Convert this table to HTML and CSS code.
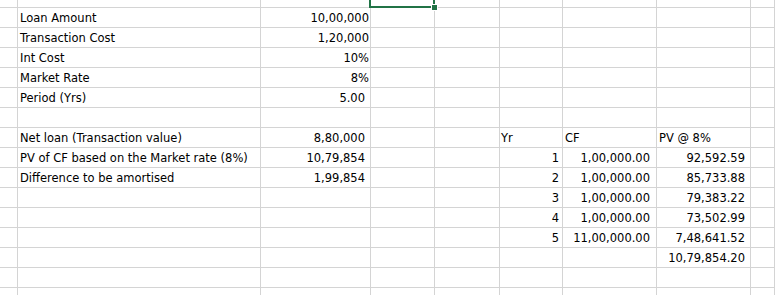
FILE: index.html
```html
<!DOCTYPE html>
<html>
<head>
<meta charset="utf-8">
<link rel="stylesheet" href="styles.css">
</head>
<body>
<div class="sheet">
  <!-- row 0 (partial) -->
  <div class="c"></div><div class="c"></div><div class="c"></div><div class="c sel"><span class="sel-box"></span><span class="sel-handle"></span></div><div class="c"></div><div class="c"></div><div class="c"></div><div class="c"></div><div class="c"></div>
  <!-- row 1 -->
  <div class="c"></div><div class="c">Loan Amount</div><div class="c num n1">10,00,000</div><div class="c"></div><div class="c"></div><div class="c"></div><div class="c"></div><div class="c"></div><div class="c"></div>
  <!-- row 2 -->
  <div class="c"></div><div class="c">Transaction Cost</div><div class="c num n1">1,20,000</div><div class="c"></div><div class="c"></div><div class="c"></div><div class="c"></div><div class="c"></div><div class="c"></div>
  <!-- row 3 -->
  <div class="c"></div><div class="c">Int Cost</div><div class="c num n1">10%</div><div class="c"></div><div class="c"></div><div class="c"></div><div class="c"></div><div class="c"></div><div class="c"></div>
  <!-- row 4 -->
  <div class="c"></div><div class="c">Market Rate</div><div class="c num n1">8%</div><div class="c"></div><div class="c"></div><div class="c"></div><div class="c"></div><div class="c"></div><div class="c"></div>
  <!-- row 5 -->
  <div class="c"></div><div class="c">Period (Yrs)</div><div class="c num n2">5.00</div><div class="c"></div><div class="c"></div><div class="c"></div><div class="c"></div><div class="c"></div><div class="c"></div>
  <!-- row 6 -->
  <div class="c"></div><div class="c"></div><div class="c"></div><div class="c"></div><div class="c"></div><div class="c"></div><div class="c"></div><div class="c"></div><div class="c"></div>
  <!-- row 7 -->
  <div class="c"></div><div class="c">Net loan (Transaction value)</div><div class="c num n2">8,80,000</div><div class="c"></div><div class="c"></div><div class="c yr">Yr</div><div class="c">CF</div><div class="c">PV @ 8%</div><div class="c"></div>
  <!-- row 8 -->
  <div class="c"></div><div class="c">PV of CF based on the Market rate (8%)</div><div class="c num n2">10,79,854</div><div class="c"></div><div class="c"></div><div class="c num ny">1</div><div class="c num ncf">1,00,000.00</div><div class="c num npv">92,592.59</div><div class="c"></div>
  <!-- row 9 -->
  <div class="c"></div><div class="c">Difference to be amortised</div><div class="c num n2">1,99,854</div><div class="c"></div><div class="c"></div><div class="c num ny">2</div><div class="c num ncf">1,00,000.00</div><div class="c num npv">85,733.88</div><div class="c"></div>
  <!-- row 10 -->
  <div class="c"></div><div class="c"></div><div class="c"></div><div class="c"></div><div class="c"></div><div class="c num ny">3</div><div class="c num ncf">1,00,000.00</div><div class="c num npv">79,383.22</div><div class="c"></div>
  <!-- row 11 -->
  <div class="c"></div><div class="c"></div><div class="c"></div><div class="c"></div><div class="c"></div><div class="c num ny">4</div><div class="c num ncf">1,00,000.00</div><div class="c num npv">73,502.99</div><div class="c"></div>
  <!-- row 12 -->
  <div class="c"></div><div class="c"></div><div class="c"></div><div class="c"></div><div class="c"></div><div class="c num ny">5</div><div class="c num ncf">11,00,000.00</div><div class="c num npv">7,48,641.52</div><div class="c"></div>
  <!-- row 13 -->
  <div class="c"></div><div class="c"></div><div class="c"></div><div class="c"></div><div class="c"></div><div class="c"></div><div class="c"></div><div class="c num npv">10,79,854.20</div><div class="c"></div>
  <!-- row 14 -->
  <div class="c"></div><div class="c"></div><div class="c"></div><div class="c"></div><div class="c"></div><div class="c"></div><div class="c"></div><div class="c"></div><div class="c"></div>
  <!-- row 15 (partial) -->
  <div class="c"></div><div class="c"></div><div class="c"></div><div class="c"></div><div class="c"></div><div class="c"></div><div class="c"></div><div class="c"></div><div class="c"></div>
</div>
</body>
</html>
```
FILE: styles.css
```css
html, body {
  margin: 0;
  padding: 0;
  background: #ffffff;
  overflow: hidden;
}

.sheet {
  display: grid;
  grid-template-columns: 18px 243px 110px 64px 65px 63px 94px 94px 1fr;
  grid-template-rows: 8px repeat(14, 20px) 20px;
  width: 775px;
  height: 295px;
  overflow: hidden;
  font-family: "DejaVu Sans", "Liberation Sans", sans-serif;
  font-size: 11.5px;
  color: #000000;
}

.c {
  box-sizing: border-box;
  border-right: 1px solid #d4d4d4;
  border-bottom: 1px solid #d4d4d4;
  padding: 1px 2px 0 2px;
  line-height: 18px;
  white-space: nowrap;
  overflow: visible;
}

.num {
  text-align: right;
}

.n1 { padding-right: 1px; }
.n2 { padding-right: 5px; }
.ny { padding-right: 3px; }
.ncf { padding-right: 6px; }
.npv { padding-right: 5px; }
.yr { padding-left: 1px; }

.sel {
  position: relative;
  overflow: visible;
}

.sel-box {
  position: absolute;
  left: -2px;
  right: -1px;
  top: -12px;
  bottom: -1px;
  border: 2px solid #217346;
  box-sizing: border-box;
}

.sel-handle {
  position: absolute;
  left: 60px;
  top: 4px;
  width: 7px;
  height: 7px;
  box-sizing: border-box;
  background: #217346;
  border: 1px solid #ffffff;
}
```
